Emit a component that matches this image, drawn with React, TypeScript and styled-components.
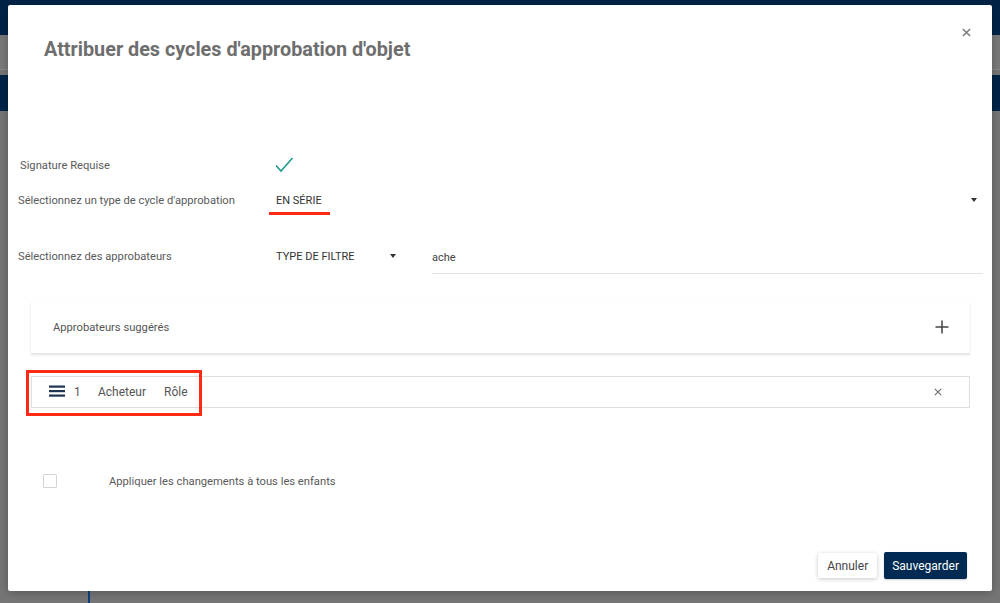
import React from "react";
import styled, { createGlobalStyle } from "styled-components";

const GlobalStyle = createGlobalStyle`
  html, body {
    margin: 0;
    padding: 0;
    height: 100%;
  }
  body {
    font-family: Roboto, "Liberation Sans", Arial, sans-serif;
    background: #767676;
    overflow: hidden;
  }
  #root {
    height: 100%;
  }
`;

const Page = styled.div`
  position: relative;
  width: 1000px;
  height: 603px;
  background: #767676;
  overflow: hidden;
`;

const AppHeader = styled.div`
  height: 35px;
  background: #002447;
`;

const AppToolbar = styled.div`
  height: 34px;
  background: #7a7a7a;
  border-bottom: 1px solid #8a8a8a;
`;

const AppNav = styled.div`
  margin-top: 5px;
  height: 36px;
  background: #002447;
`;

const AppTrack = styled.div`
  position: absolute;
  left: 88px;
  top: 590px;
  width: 2px;
  height: 20px;
  background: #0d3f80;
`;

const Modal = styled.div`
  position: absolute;
  top: 5px;
  left: 8px;
  width: 984px;
  height: 586px;
  background: #fff;
  border-radius: 2px;
  box-shadow: 0 2px 10px rgba(0, 0, 0, 0.25);
  display: flex;
  flex-direction: column;
  box-sizing: border-box;
`;

const Header = styled.div`
  padding: 33px 36px 0;
`;

const Title = styled.h2`
  margin: 0;
  font-size: 19.8px;
  line-height: 24px;
  font-weight: 700;
  color: #6e6e6e;
`;

const CloseButton = styled.button`
  position: absolute;
  top: 19px;
  right: 18px;
  width: 16px;
  height: 16px;
  padding: 0;
  border: none;
  background: none;
  display: flex;
  align-items: center;
  justify-content: center;
  cursor: pointer;
`;

const Form = styled.div`
  margin-top: 91px;
  padding: 0 9px 0 10px;
  display: flex;
  flex-direction: column;
`;

const Row = styled.div<{ $gap?: number }>`
  display: flex;
  align-items: center;
  height: 24px;
  margin-top: ${(p) => p.$gap ?? 0}px;
`;

const Label = styled.div<{ $indent?: number }>`
  width: 258px;
  flex: none;
  padding-left: ${(p) => p.$indent ?? 0}px;
  box-sizing: border-box;
  font-size: 11.2px;
  color: #5a5a5a;
`;

const Select = styled.div`
  flex: 1;
  display: flex;
  align-items: center;
  justify-content: space-between;
  padding: 0 6px 0 0;
  height: 24px;
`;

const SelectValue = styled.span<{ $marked?: boolean }>`
  position: relative;
  font-size: 11px;
  color: #333;
  text-transform: uppercase;
  &::after {
    content: "";
    display: ${(p) => (p.$marked ? "block" : "none")};
    position: absolute;
    left: -7px;
    right: -8px;
    bottom: -8px;
    height: 3px;
    background: #ff2a12;
  }
`;

const FilterSelect = styled.div`
  width: 120px;
  flex: none;
  display: flex;
  align-items: center;
  justify-content: space-between;
  box-sizing: border-box;
  margin-right: 36px;
  height: 24px;
`;

const SearchInput = styled.div`
  flex: 1;
  height: 30px;
  margin-top: 4px;
  display: flex;
  align-items: center;
  border-bottom: 1px solid #e2e2e2;
  font-size: 11px;
  color: #444;
`;

const Caret = styled.span`
  width: 0;
  height: 0;
  border-left: 3.5px solid transparent;
  border-right: 3.5px solid transparent;
  border-top: 4px solid #333;
`;

const Lists = styled.div`
  margin-top: 33px;
  padding: 0 22px 0 23px;
  display: flex;
  flex-direction: column;
`;

const SuggestCard = styled.div`
  height: 53px;
  display: flex;
  align-items: center;
  justify-content: space-between;
  padding: 0 21px 0 22px;
  background: #fff;
  box-shadow: 0 1px 2px rgba(0, 0, 0, 0.12);
  border-bottom: 1px solid #e4e4e4;
  box-sizing: border-box;
  font-size: 11.2px;
  color: #555;
`;

const ApproverRow = styled.div`
  position: relative;
  margin-top: 22px;
  height: 32px;
  display: flex;
  align-items: center;
  padding: 0 27px 0 17px;
  border: 1px solid #dedede;
  box-sizing: border-box;
  font-size: 12px;
  color: #555;
`;

const RowCell = styled.span<{ $w: number }>`
  width: ${(p) => p.$w}px;
  flex: none;
`;

const Spacer = styled.div`
  flex: 1;
`;

const Highlight = styled.div`
  position: absolute;
  left: -6px;
  top: -7px;
  width: 176px;
  height: 46px;
  border: 3px solid #ff2a12;
  box-sizing: border-box;
`;

const CheckRow = styled.div`
  margin-top: 65px;
  padding-left: 35px;
  display: flex;
  align-items: center;
  height: 16px;
`;

const CheckBox = styled.span`
  width: 14px;
  height: 14px;
  border: 1px solid #d4d4d4;
  border-radius: 1px;
  box-sizing: border-box;
  margin-right: 52px;
`;

const CheckLabel = styled.span`
  font-size: 11.2px;
  color: #5a5a5a;
`;

const Footer = styled.div`
  margin-top: auto;
  padding: 0 25px 12px 0;
  display: flex;
  justify-content: flex-end;
  align-items: center;
  gap: 7px;
`;

const Button = styled.button<{ $primary?: boolean }>`
  height: ${(p) => (p.$primary ? 27 : 25)}px;
  padding: 0 ${(p) => (p.$primary ? 8 : 9)}px;
  border: none;
  border-radius: 2px;
  font-family: Roboto, "Liberation Sans", Arial, sans-serif;
  font-size: 12px;
  cursor: pointer;
  background: ${(p) => (p.$primary ? "#002a52" : "#fff")};
  color: ${(p) => (p.$primary ? "#fff" : "#444")};
  box-shadow: ${(p) => (p.$primary ? "0 1px 2px rgba(0,0,0,0.2)" : "0 1px 4px rgba(0,0,0,0.22)")};
`;

const MenuIcon = () => (
  <svg width="16" height="12" viewBox="0 0 16 12">
    <rect x="0" y="0.5" width="16" height="2.2" fill="#1d3553" />
    <rect x="0" y="5" width="16" height="2.2" fill="#1d3553" />
    <rect x="0" y="9.5" width="16" height="2.2" fill="#1d3553" />
  </svg>
);

const CheckIcon = () => (
  <svg width="20" height="18" viewBox="0 0 20 18">
    <polyline points="0,9.5 5,15 16.5,2" fill="none" stroke="#1f9c8d" strokeWidth="1.6" />
  </svg>
);

const CrossIcon = ({ size, color, w }: { size: number; color: string; w: number }) => (
  <svg width={size} height={size} viewBox="0 0 10 10">
    <path d="M1 1 L9 9 M9 1 L1 9" stroke={color} strokeWidth={w} fill="none" />
  </svg>
);

const PlusIcon = () => (
  <svg width="14" height="14" viewBox="0 0 14 14">
    <path d="M7 0.5 V13.5 M0.5 7 H13.5" stroke="#444" strokeWidth="1.5" fill="none" />
  </svg>
);

export default function App() {
  return (
    <>
      <GlobalStyle />
      <Page>
        <AppHeader />
        <AppToolbar />
        <AppNav />
        <AppTrack />
        <Modal>
          <Header>
            <Title>Attribuer des cycles d'approbation d'objet</Title>
          </Header>
          <CloseButton aria-label="Fermer">
            <CrossIcon size={9} color="#777" w={1.6} />
          </CloseButton>

          <Form>
            <Row>
              <Label $indent={2}>Signature Requise</Label>
              <Select>
                <CheckIcon />
              </Select>
            </Row>
            <Row $gap={11}>
              <Label>Sélectionnez un type de cycle d'approbation</Label>
              <Select>
                <SelectValue $marked>En série</SelectValue>
                <Caret />
              </Select>
            </Row>
            <Row $gap={32}>
              <Label>Sélectionnez des approbateurs</Label>
              <FilterSelect>
                <SelectValue>Type de filtre</SelectValue>
                <Caret />
              </FilterSelect>
              <SearchInput>ache</SearchInput>
            </Row>
          </Form>

          <Lists>
            <SuggestCard>
              <span>Approbateurs suggérés</span>
              <PlusIcon />
            </SuggestCard>
            <ApproverRow>
              <RowCell $w={25}>
                <MenuIcon />
              </RowCell>
              <RowCell $w={24}>1</RowCell>
              <RowCell $w={66}>Acheteur</RowCell>
              <RowCell $w={40}>Rôle</RowCell>
              <Spacer />
              <CrossIcon size={8} color="#666" w={1.3} />
              <Highlight />
            </ApproverRow>
          </Lists>

          <CheckRow>
            <CheckBox />
            <CheckLabel>Appliquer les changements à tous les enfants</CheckLabel>
          </CheckRow>

          <Footer>
            <Button>Annuler</Button>
            <Button $primary>Sauvegarder</Button>
          </Footer>
        </Modal>
      </Page>
    </>
  );
}
